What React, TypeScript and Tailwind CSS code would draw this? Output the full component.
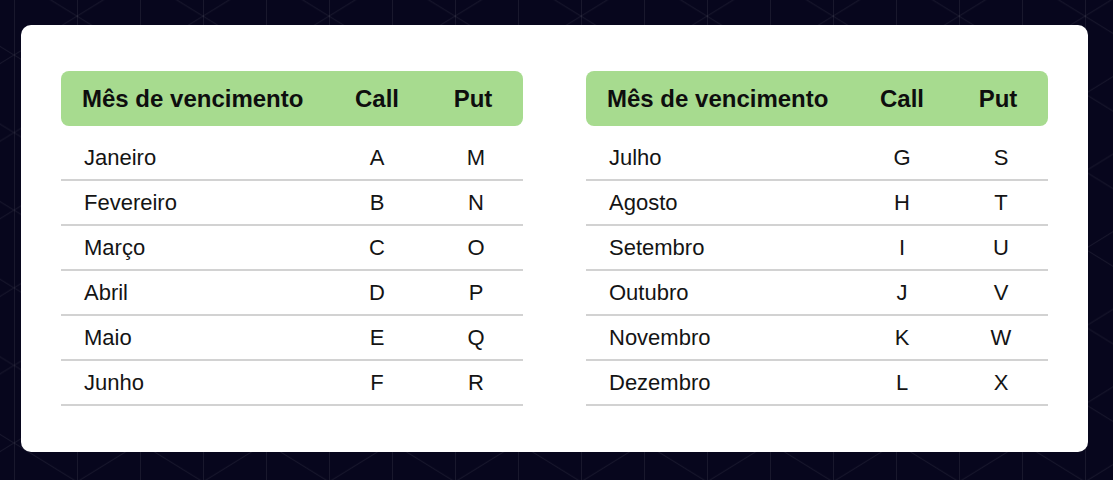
const firstHalf = [
  { month: 'Janeiro', call: 'A', put: 'M' },
  { month: 'Fevereiro', call: 'B', put: 'N' },
  { month: 'Março', call: 'C', put: 'O' },
  { month: 'Abril', call: 'D', put: 'P' },
  { month: 'Maio', call: 'E', put: 'Q' },
  { month: 'Junho', call: 'F', put: 'R' },
];

const secondHalf = [
  { month: 'Julho', call: 'G', put: 'S' },
  { month: 'Agosto', call: 'H', put: 'T' },
  { month: 'Setembro', call: 'I', put: 'U' },
  { month: 'Outubro', call: 'J', put: 'V' },
  { month: 'Novembro', call: 'K', put: 'W' },
  { month: 'Dezembro', call: 'L', put: 'X' },
];

type Row = { month: string; call: string; put: string };

function GridBackground() {
  return (
    <svg className="absolute inset-0 h-full w-full" aria-hidden="true">
      <defs>
        <pattern id="tri" x="14" y="55" width="126" height="77.6" patternUnits="userSpaceOnUse">
          <g stroke="rgba(255,255,255,0.07)" strokeWidth="1" fill="none">
            <line x1="0.5" y1="0" x2="0.5" y2="77.6" />
            <line x1="63.5" y1="0" x2="63.5" y2="77.6" />
            <line x1="0" y1="0" x2="126" y2="77.6" />
            <line x1="0" y1="77.6" x2="126" y2="0" />
          </g>
        </pattern>
      </defs>
      <rect width="100%" height="100%" fill="url(#tri)" />
    </svg>
  );
}

function ExpiryTable({ rows }: { rows: Row[] }) {
  return (
    <div className="w-[462px] shrink-0">
      {/* green header */}
      <div className="grid h-[55px] grid-cols-[1fr_96px_96px] items-center rounded-lg bg-[#a7db8f] pl-[21px] pr-[2px] text-[24px] font-bold text-[#0e0e0e]">
        <span>Mês de vencimento</span>
        <span className="text-center">Call</span>
        <span className="text-center">Put</span>
      </div>

      <div className="mt-[10px]">
        {rows.map((r) => (
          <div
            key={r.month}
            className="grid h-[45px] grid-cols-[1fr_96px_96px] items-center border-b-2 border-[#d2d2d2] pl-[23px] pr-[2px] text-[22px] text-[#141414]"
          >
            <span>{r.month}</span>
            <span className="text-center">{r.call}</span>
            <span className="pl-[6px] text-center">{r.put}</span>
          </div>
        ))}
      </div>
    </div>
  );
}

export default function App() {
  return (
    <div
      className="relative h-[480px] w-[1113px] overflow-hidden bg-[#07061d]"
      style={{ fontFamily: '"Liberation Sans", Arial, sans-serif' }}
    >
      <GridBackground />
      <div className="relative pl-[21px] pt-[25px]">
        <div className="flex w-[1067px] gap-[63px] rounded-[10px] bg-white px-10 pb-[46px] pt-[46px]">
          <ExpiryTable rows={firstHalf} />
          <ExpiryTable rows={secondHalf} />
        </div>
      </div>
    </div>
  );
}
